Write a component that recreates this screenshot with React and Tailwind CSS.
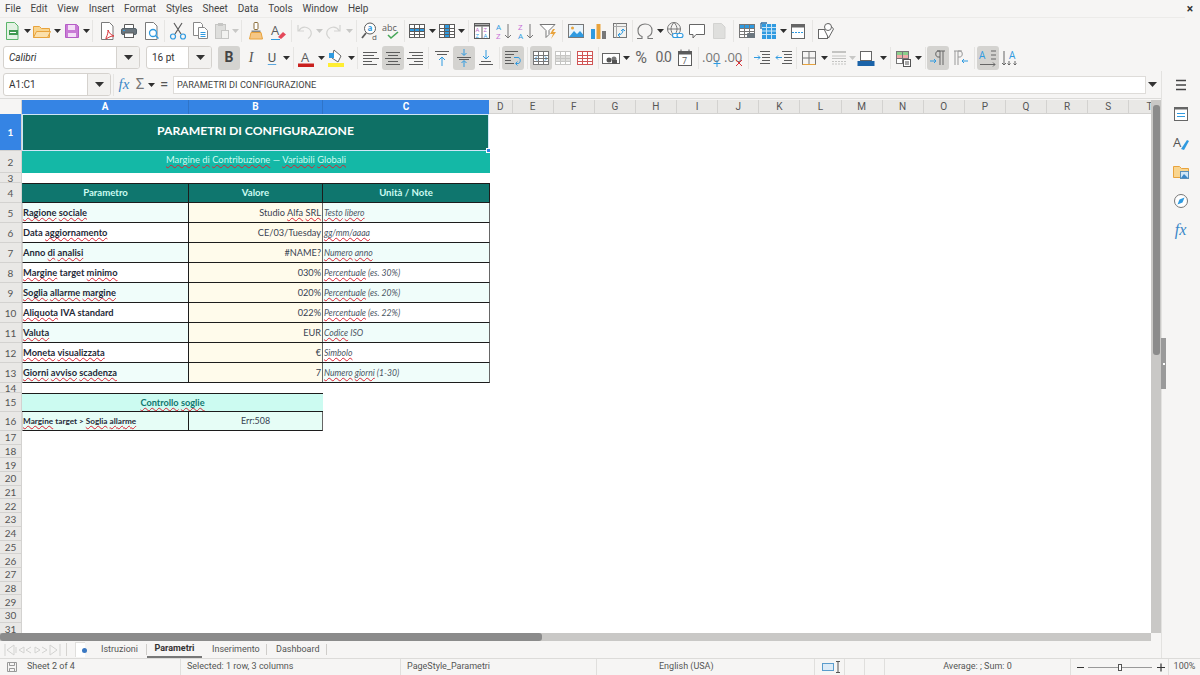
import React from 'react';

const B = '#2f9ae0', D = '#5c5c5c', O = '#e8a33d', R = '#d9343a';

const Ic = ({ children, w = 20 }) => (
  <svg width={w} height="20" viewBox={`0 0 ${w} 20`} fill="none" strokeWidth="1">{children}</svg>
);
const T = ({ on, children }) => (
  <div className={`flex h-[24px] w-[22px] shrink-0 items-center justify-center rounded-[3px] ${on ? 'bg-[#d4d3d0]' : ''}`}>{children}</div>
);
const A = ({ w, light }) => (
  <div className={`flex shrink-0 items-center justify-center ${w}`}>
    <svg width="7" height="4" viewBox="0 0 7 4" className="shrink-0"><path d="M0 0h7L3.500 4z" fill={light ? '#c8c8c6' : '#2e2e2e'} /></svg>
  </div>
);
const S = ({ w }) => (
  <div className={`flex h-[22px] shrink-0 justify-center ${w}`}><div className="h-full w-px bg-[#e6e5e3]" /></div>
);

const Lines = ({ xs, stroke = D }) => xs.map((l, i) => <path key={i} d={`M${l[0]} ${4 + i * 3}.500H${l[1]}`} stroke={stroke} />);
const Txt = ({ x, y, s = 10, c = D, i, b, children }) => (
  <text x={x} y={y} fontSize={s} fill={c} fontFamily="'Open Sans',sans-serif" fontStyle={i ? 'italic' : 'normal'} fontWeight={b ? 700 : 400}>{children}</text>
);
const Doc = ({ stroke = '#7a7a7a' }) => <path d="M4.500 1.500h8l3.500 3.500v13.500h-11.500z" fill="#fff" stroke={stroke} />;

const Grid3 = ({ fill, stroke = D }) => (
  <g>
    <rect x="2.500" y="3.500" width="15" height="13" fill="#fff" stroke={stroke} />
    {fill}
    <path d="M2.500 7.500h15M2.500 10.500h15M2.500 13.500h15M7.500 3.500v13M12.500 3.500v13" stroke={stroke} />
  </g>
);

function Toolbar1() {
  return (
    <div className="flex h-[26px] items-center pl-px">
      <T><Ic><path d="M4.500 1.500h8l3.500 3.500v13.500h-11.500z" fill="#e3f2e3" stroke="#5bb56a" /><rect x="7" y="9" width="9" height="5" fill="#3f9a50" /><path d="M8 11.500h6" stroke="#fff" /></Ic></T>
      <A w="w-[8px]" />
      <T><Ic><path d="M1.500 5.500h6l2 2h8v9h-16z" fill="#f9d58f" stroke={O} /><path d="M1.500 16.500l3-6h14l-3 6z" fill="#fbe0ac" stroke={O} /></Ic></T>
      <A w="w-[8px]" />
      <T><Ic><path d="M3.500 3.500h11l2 2v11h-13z" fill="#c97bd6" stroke="#b55cc6" /><rect x="6" y="4" width="7" height="5" fill="#f4dff7" /><rect x="6" y="12" width="8" height="4" fill="#f4dff7" /></Ic></T>
      <A w="w-[6px]" />
      <S w="w-[7px]" />
      <T><Ic><Doc /><path d="M9 17c2-4 2-6 2-8 1 3 3 5 6 6-3 0-5 1-8 3z" stroke={R} fill="#fff" /></Ic></T>
      <T><Ic><path d="M5.500 3.500h9v4h-9z" fill="#fff" stroke={D} /><rect x="2.500" y="7.500" width="15" height="6" rx="1.500" fill="#6b767e" stroke="#56626a" /><rect x="5.500" y="12" width="9" height="4.500" fill="#fff" stroke={D} /><path d="M4 9.500h2" stroke={B} /></Ic></T>
      <T><Ic><Doc /><circle cx="12" cy="12" r="3.500" fill="#fff" stroke={B} strokeWidth="1.300" /><path d="M14.500 14.500l3 3" stroke={B} strokeWidth="1.300" /></Ic></T>
      <S w="w-[5px]" />
      <T><Ic><path d="M6 2l7 11M14 2L7 13" stroke={D} strokeWidth="1.200" /><circle cx="5" cy="15.500" r="2.500" stroke={B} strokeWidth="1.200" /><circle cx="15" cy="15.500" r="2.500" stroke={B} strokeWidth="1.200" /></Ic></T>
      <T><Ic><path d="M3.500 1.500h7l2 2v11h-9z" fill="#fff" stroke="#888" /><path d="M8.500 6.500h6l3 3v8h-9z" fill="#fff" stroke="#888" /><path d="M10.500 11.500h5M10.500 13.500h5M10.500 15.500h5" stroke={B} /></Ic></T>
      <T><Ic><rect x="3.500" y="3.500" width="10" height="14" fill="#dededc" stroke="#c6c6c4" /><rect x="6" y="2" width="5" height="3" fill="#c6c6c4" /><rect x="9.500" y="9.500" width="7" height="8" fill="#f2f2f0" stroke="#c6c6c4" /></Ic></T>
      <A w="w-[5px]" light />
      <S w="w-[7px]" />
      <T><Ic><rect x="8" y="1.500" width="4" height="7" rx="1" fill="#fff" stroke="#8a6d3b" /><path d="M5.500 9.500h9v2h-9z" fill="#888" /><path d="M5 11.500h10l1.500 6.500h-13z" fill="#f6c785" stroke={O} /></Ic></T>
      <T><Ic><Txt x="3" y="14" s={13}>A</Txt><path d="M10 16l5-5 3 2.500-5 4.500z" fill="#e4485a" /><path d="M3 18.500h9" stroke={B} /></Ic></T>
      <S w="w-[4px]" />
      <T><Ic><path d="M5 9.500c3-5 10-4 12 1 1 3-1 6-3 7M4 4v6h6" stroke="#d3d3d1" strokeWidth="1.200" /></Ic></T>
      <A w="w-[8px]" light />
      <T><Ic><path d="M15 9.500c-3-5-10-4-12 1-1 3 1 6 3 7M16 4v6h-6" stroke="#d3d3d1" strokeWidth="1.200" /></Ic></T>
      <A w="w-[8px]" light />
      <S w="w-[6px]" />
      <T><Ic><circle cx="10" cy="7.500" r="5.500" fill="#fff" stroke={D} /><path d="M6 12l-4 5" stroke={D} strokeWidth="1.800" /><Txt x="7.500" y="10" s={8} c={B} b>a</Txt><Txt x="12" y="19" s={8}>d</Txt></Ic></T>
      <T><Ic w={22}><Txt x="1" y="10" s={9}>abc</Txt><path d="M7 14l3 3 7-6" stroke="#46a758" strokeWidth="1.600" /></Ic></T>
      <S w="w-[3px]" />
      <T><Ic><Grid3 fill={<rect x="3" y="7.500" width="14" height="3" fill={B} />} /></Ic></T>
      <A w="w-[8px]" />
      <T><Ic><Grid3 fill={<rect x="7.500" y="4" width="5" height="12" fill={B} />} /></Ic></T>
      <A w="w-[7px]" />
      <S w="w-[6px]" />
      <T><Ic><rect x="2.500" y="2.500" width="15" height="15" stroke={D} fill="#fff" /><path d="M2.500 4.500h15" stroke={D} strokeWidth="2" /><path d="M10 5.500v12" stroke={D} /><Txt x="3.500" y="10.500" s={6} c="#b65fc2">A</Txt><Txt x="11.500" y="10.500" s={6} c="#b65fc2">Z</Txt><Txt x="3.500" y="16.500" s={6} c={B}>Z</Txt><Txt x="11.500" y="16.500" s={6} c={B}>A</Txt></Ic></T>
      <T><Ic><Txt x="2" y="9" s={8} c={B}>A</Txt><Txt x="2" y="18" s={8} c="#c86dd7">Z</Txt><path d="M14 3v14M11 14l3 3 3-3" stroke="#777" /></Ic></T>
      <T><Ic><Txt x="2" y="9" s={8} c="#c86dd7">Z</Txt><Txt x="2" y="18" s={8} c={B}>A</Txt><path d="M14 3v14M11 14l3 3 3-3" stroke="#777" /></Ic></T>
      <T><Ic><path d="M2 3.500h15l-6 6v4l-3 3v-7z" fill="#fff" stroke="#777" /><path d="M15 8l-3 5h3l-2 5 5-7h-3l2-3z" fill={O} /></Ic></T>
      <S w="w-[6px]" />
      <T><Ic><rect x="2.500" y="3.500" width="15" height="13" fill="#eaf4fb" stroke="#777" /><circle cx="6.500" cy="7" r="1.500" fill={O} /><path d="M3 16l5-6 3 3 3-3 3.500 4v2H3z" fill={B} /></Ic></T>
      <T><Ic><rect x="3" y="8" width="4" height="10" fill={B} /><rect x="8.500" y="3" width="4" height="15" fill={O} /><rect x="14" y="10" width="4" height="8" fill="#777" /></Ic></T>
      <T><Ic><rect x="3.500" y="2.500" width="13" height="14" fill="#f2f2f0" stroke="#777" /><path d="M3.500 5.500h13M6.500 2.500v14" stroke="#aaa" /><path d="M8 14c3 0 5-2 5-5M11 10l2-2 2 2M10 12l-2 2 2 2" stroke={B} /></Ic></T>
      <S w="w-[3px]" />
      <T><Ic><path d="M2 17.500h5v-2c-3-1-4-3-4-6 0-4 3-6.500 7-6.500s7 2.500 7 6.500c0 3-1 5-4 6v2h5" stroke="#777" strokeWidth="1.100" /></Ic></T>
      <A w="w-[8px]" />
      <T><Ic><circle cx="9" cy="8" r="6.500" stroke="#777" /><path d="M2.500 8h13M9 1.500c-4 4-4 9 0 13M9 1.500c4 4 4 9 0 13" stroke="#777" /><rect x="7.500" y="12.500" width="6" height="4" rx="2" fill="#fff" stroke={B} strokeWidth="1.100" /><rect x="12" y="12.500" width="6" height="4" rx="2" fill="#fff" stroke={B} strokeWidth="1.100" /></Ic></T>
      <T><Ic><path d="M2.500 3.500h15v10H9l-3 3.500v-3.500H2.500z" fill="#fff" stroke="#666" /></Ic></T>
      <T><Ic><path d="M4.500 2.500h8l3.500 3.500v11.500H4.500z" fill="#dfdfdd" stroke="#d3d3d1" /></Ic></T>
      <S w="w-[6px]" />
      <T><Ic><Grid3 stroke="#777" fill={<rect x="3" y="4" width="14" height="3.500" fill={B} />} /><rect x="10" y="12" width="8" height="5" rx="1" fill="#6b767e" /></Ic></T>
      <T><Ic><rect x="3" y="3" width="14" height="15" fill={B} /><path d="M3 6.500h14M3 10h14M3 13.500h14M7.500 3v15M12.500 3v15" stroke="#c9e5f7" /><path d="M2 2h6M2 2v6" stroke="#2b6ca3" strokeWidth="1.300" /></Ic></T>
      <A w="w-[7px]" />
      <T><Ic><rect x="3.500" y="3.500" width="13" height="14" fill="#fff" stroke="#666" /><rect x="3.500" y="3.500" width="13" height="3" fill="#666" /><path d="M4 11.500h12" stroke={B} strokeDasharray="2 1" /></Ic></T>
      <S w="w-[6px]" />
      <T><Ic><rect x="2.500" y="8.500" width="9" height="9" fill="#fff" stroke="#666" /><path d="M12.500 2l5 6-5 9-4-8z" fill="#fff" stroke="#666" /><circle cx="12" cy="6" r="3.500" fill="#fff" stroke="#666" /></Ic></T>
    </div>
  );
}

const Combo = ({ w, label, italic }) => (
  <div className={`flex h-[23px] shrink-0 overflow-hidden rounded-[3px] border border-[#d5d2ce] bg-white ${w}`}>
    <div className={`flex min-w-0 flex-1 items-center pl-[5px] text-[10px] text-[#333] ${italic ? 'italic' : ''}`}>{label}</div>
    <div className="flex w-[23px] items-center justify-center border-l border-[#d5d2ce] bg-[#f2f1ef]">
      <svg width="9" height="5" viewBox="0 0 9 5"><path d="M0 0h9L4.500 5z" fill="#333" /></svg>
    </div>
  </div>
);

const Align = ({ rows }) => <Ic><Lines xs={rows} /></Ic>;

function Toolbar2() {
  return (
    <div className="flex h-[27px] items-center pl-[3px]">
      <Combo w="w-[137px] mr-[6px]" label="Calibri" italic />
      <Combo w="w-[66px]" label="16 pt" />
      <div className="w-[6px] shrink-0" />
      <T on><span className="text-[14px] font-bold text-[#444]">B</span></T>
      <T><span className="font-['Liberation_Serif',serif] text-[14px] italic text-[#555]">I</span></T>
      <div className="flex w-[20px] shrink-0 justify-center"><span className="text-[13px] text-[#555] underline decoration-[#5aa7de] underline-offset-2">U</span></div>
      <A w="w-[9px]" />
      <S w="w-[4px]" />
      <T><Ic><Txt x="5" y="14" s={13}>A</Txt><rect x="2" y="15.500" width="16" height="3.500" fill="#c9211e" /></Ic></T>
      <A w="w-[8px]" />
      <T><Ic><path d="M8 2l7 6-3 6-6-4z" fill="#fff" stroke="#666" /><rect x="3" y="5" width="5" height="5" fill={B} /><rect x="2" y="15" width="16" height="4" fill="#ffee33" /></Ic></T>
      <A w="w-[8px]" />
      <S w="w-[5px]" />
      <T><Align rows={[[2, 16], [2, 13], [2, 18], [2, 11], [2, 16]]} /></T>
      <T on><Align rows={[[3, 17], [5, 15], [2, 18], [5, 15], [3, 17]]} /></T>
      <T><Align rows={[[4, 18], [7, 18], [2, 18], [9, 18], [4, 18]]} /></T>
      <S w="w-[5px]" />
      <T><Ic><path d="M3 3.500h14M5 6.500h10" stroke={D} /><path d="M10 18V9M7 12l3-3 3 3" stroke={B} /></Ic></T>
      <T on><Ic><path d="M10 1v6M7.500 5l2.500 2.500L12.500 5M10 19v-6M7.500 15l2.500-2.500 2.500 2.500" stroke={B} /><path d="M3 9.500h14M5 11.500h10" stroke={D} /></Ic></T>
      <T><Ic><path d="M10 2v9M7 8l3 3 3-3" stroke={B} /><path d="M5 13.500h10M3 16.500h14" stroke={D} /></Ic></T>
      <S w="w-[5px]" />
      <T on><Ic><path d="M2 3.500h13M2 6.500h9M2 9.500h6M2 12.500h6M2 15.500h9" stroke={D} /><path d="M11 9.500h4c3 0 3 6 0 6h-2M14.500 13.500l-2 2 2 2" stroke={B} /></Ic></T>
      <S w="w-[6px]" />
      <T on><Ic><Grid3 stroke="#777" fill={<path d="M4 10.500h12M6 8.500l-2 2 2 2M14 8.500l2 2-2 2" stroke={B} />} /></Ic></T>
      <T><Ic><Grid3 stroke="#c6c6c4" fill={<rect x="3" y="7.500" width="14" height="6" fill="#dededc" />} /></Ic></T>
      <T><Ic><Grid3 stroke="#d05555" /></Ic></T>
      <S w="w-[4px]" />
      <T><Ic><rect x="1.500" y="5.500" width="17" height="10" fill="#fff" stroke="#666" /><circle cx="8" cy="12" r="2.500" fill="#555" /><circle cx="13" cy="11" r="2.500" fill="#777" /><rect x="11" y="12" width="5" height="4" fill="#555" /></Ic></T>
      <A w="w-[8px]" />
      <T><span className="text-[16px] text-[#666]">%</span></T>
      <T><span className="text-[14px] tracking-[-1.500px] text-[#666]">0.0</span></T>
      <T><Ic><rect x="3.500" y="3.500" width="13" height="14" fill="#fff" stroke={D} /><path d="M3.500 3.500h13v3h-13z" fill={D} /><path d="M6 1.500v3M14 1.500v3" stroke={D} /><Txt x="7" y="15.500" s={9}>7</Txt></Ic></T>
      <S w="w-[5px]" />
      <T><Ic><Txt x="0" y="14" s={13} c="#777">.00</Txt><path d="M15 12v7M11.500 15.500h7" stroke={B} /></Ic></T>
      <T><Ic><Txt x="0" y="14" s={13} c="#777">.00</Txt><path d="M12 12l6 6M18 12l-6 6" stroke={R} /></Ic></T>
      <S w="w-[6px]" />
      <T><Ic><path d="M8 3.500h10M10 6.500h8M10 9.500h8M10 12.500h8M8 15.500h10" stroke={D} /><path d="M2 9.500h6M6 7.500l2 2-2 2" stroke={B} /></Ic></T>
      <T><Ic><path d="M8 3.500h10M10 6.500h8M10 9.500h8M10 12.500h8M8 15.500h10" stroke={D} /><path d="M2 9.500h6M4 7.500l-2 2 2 2" stroke={B} /></Ic></T>
      <S w="w-[3px]" />
      <T><Ic><rect x="3.500" y="3.500" width="13" height="13" stroke="#777" /><path d="M10 3.500v13M3.500 10h13" stroke="#777" /><path d="M3.500 16.500h13" stroke={O} /></Ic></T>
      <A w="w-[8px]" />
      <T><Ic><path d="M3 4h14" stroke="#c4c4c2" strokeWidth="2" /><path d="M3 8h14M3 10.500h14" stroke="#c4c4c2" /><path d="M3 13.500h14M3 16h14" stroke="#c4c4c2" strokeDasharray="2 1" /></Ic></T>
      <A w="w-[5px]" light />
      <T><Ic><rect x="4.500" y="3.500" width="11" height="9" fill="#fff" stroke="#666" /><rect x="1.500" y="13" width="17" height="5" fill="#1b63a8" /></Ic></T>
      <A w="w-[12px]" />
      <S w="w-[3px]" />
      <T><Ic><rect x="3.500" y="3.500" width="12" height="12" fill="#fff" stroke="#777" /><rect x="4" y="4" width="11" height="3" fill="#8ccf8c" /><rect x="4" y="7" width="11" height="3" fill="#f0aaaa" /><path d="M3.500 10.500h12M9.500 3.500v12" stroke="#777" /><rect x="10.500" y="11.500" width="7" height="7" fill="#fff" stroke="#555" /><path d="M12 14h4M12 16h4" stroke="#555" /></Ic></T>
      <A w="w-[9px]" />
      <S w="w-[4px]" />
      <T on><Ic><path d="M12 3v14M15 3v14M9 3h8M12 3H10c-3 0-3 6 0 6h2" stroke="#666" /><path d="M2 13h6M6 11l2 2-2 2" stroke={B} /></Ic></T>
      <T><Ic><path d="M8 3v14M5 3v14M12 3H4M8 3h2c3 0 3 6 0 6H8" stroke="#999" /><path d="M18 13h-6M14 11l-2 2 2 2" stroke={B} /></Ic></T>
      <S w="w-[6px]" />
      <T on><Ic><Txt x="1" y="11" s={10} c={B}>A</Txt><path d="M2 16.500h15M15 14.500l2 2-2 2M13 3h5M13 7h5M13 11h5" stroke="#666" /></Ic></T>
      <T><Ic><Txt x="9" y="11" s={10} c={B}>A</Txt><path d="M4 3v14M2 15l2 2 2-2M9 13v4M7.500 15.500L9 17l1.500-1.500M15 13v4M13.500 15.500L15 17l1.500-1.500" stroke="#666" /></Ic></T>
    </div>
  );
}

function FormulaBar() {
  return (
    <div className="flex h-[27px] items-center pl-[3px] pr-[3px]">
      <div className="flex h-[23px] w-[108px] shrink-0 overflow-hidden rounded-[3px] border border-[#d5d2ce] bg-white">
        <div className="flex flex-1 items-center pl-[5px] text-[10px] text-[#333]">A1:C1</div>
        <div className="flex w-[23px] items-center justify-center border-l border-[#d5d2ce] bg-[#f2f1ef]">
          <svg width="9" height="5" viewBox="0 0 9 5"><path d="M0 0h9L4.500 5z" fill="#333" /></svg>
        </div>
      </div>
      <S w="w-[4px]" />
      <div className="flex w-[18px] shrink-0 justify-center font-['Liberation_Serif',serif] text-[15px] italic text-[#3a87c8]">fx</div>
      <div className="flex w-[14px] shrink-0 justify-center text-[15px] text-[#777]">Σ</div>
      <A w="w-[8px]" />
      <div className="flex w-[18px] shrink-0 justify-center text-[15px] text-[#555]">=</div>
      <div className="flex h-[18px] w-[973px] shrink-0 items-center border border-[#dedcd9] bg-white pl-[3px] text-[9.200px] text-[#444]">PARAMETRI DI CONFIGURAZIONE</div>
      <div className="flex flex-1 justify-center">
        <svg width="9" height="5" viewBox="0 0 9 5"><path d="M0 0h9L4.500 5z" fill="#333" /></svg>
      </div>
    </div>
  );
}

const W = ({ children }) => <span className="underline decoration-[#d23] decoration-wavy decoration-1 underline-offset-[0.500px] [text-decoration-skip-ink:none]">{children}</span>;

const RowH = ({ n, active }) => (
  <div className={`flex h-full w-[22px] shrink-0 items-center justify-center overflow-hidden border-b border-r border-[#d3d2d0] text-[10px] leading-none ${active ? 'bg-[#3584e4] font-bold text-white' : 'bg-[#e9e8e6] text-[#555]'}`}>{n}</div>
);

const rows = [
  [5, <><W>Ragione</W> <W>sociale</W></>, <>Studio <W>Alfa</W> <W>SRL</W></>, <><W>Testo</W> <W>libero</W></>],
  [6, <>Data <W>aggiornamento</W></>, 'CE/03/Tuesday', <><W>gg/mm/aaaa</W></>],
  [7, <>Anno <W>di</W> <W>analisi</W></>, '#NAME?', <><W>Numero</W> <W>anno</W></>],
  [8, <><W>Margine</W> target <W>minimo</W></>, '030%', <><W>Percentuale</W> (es. 30%)</>],
  [9, <><W>Soglia</W> <W>allarme</W> <W>margine</W></>, '020%', <><W>Percentuale</W> (es. 20%)</>],
  [10, <><W>Aliquota</W> IVA standard</>, '022%', <><W>Percentuale</W> (es. 22%)</>],
  [11, <><W>Valuta</W></>, 'EUR', <><W>Codice</W> ISO</>],
  [12, <><W>Moneta</W> <W>visualizzata</W></>, '€', <><W>Simbolo</W></>],
  [13, <><W>Giorni</W> <W>avviso</W> <W>scadenza</W></>, '7', <><W>Numero</W> <W>giorni</W> (1-30)</>],
];
const emptyRows = [17, 18, 19, 20, 21, 22, 23, 24, 25, 26, 27, 28, 29, 30, 31];
const otherCols = ['E', 'F', 'G', 'H', 'I', 'J', 'K', 'L', 'M', 'N', 'O', 'P', 'Q', 'R', 'S', 'T'];

function Sheet() {
  return (
    <div className="relative min-w-0 flex-1 overflow-hidden bg-white font-['Lato',sans-serif]">
      {/* column headers */}
      <div className="flex h-[14px] font-['Roboto',sans-serif] text-[10px] leading-[14px]">
        <div className="w-[22px] shrink-0 border-r border-[#d3d2d0] bg-[#f6f5f4]" />
        <div className="flex w-[467px] shrink-0 bg-[#3584e4] text-center font-bold text-white">
          <div className="w-[167px] border-r border-[#2f74c8]">A</div>
          <div className="w-[134px] border-r border-[#2f74c8]">B</div>
          <div className="flex-1">C</div>
        </div>
        <div className="w-[23.500px] shrink-0 border-b border-r border-[#d3d2d0] bg-[#e9e8e6] text-center text-[#555]">D</div>
        {otherCols.map(c => (
          <div key={c} className="w-[41.140px] shrink-0 border-b border-r border-[#d3d2d0] bg-[#e9e8e6] text-center text-[#555]">{c}</div>
        ))}
      </div>

      <div className="flex h-[37px]">
        <RowH n="1" active />
        <div className="relative flex w-[467px] shrink-0 items-center justify-center border border-[#cfe6f7] bg-[#0e7065] pb-[2px] text-[12.200px] font-bold text-white">
          PARAMETRI DI CONFIGURAZIONE
          <div className="absolute right-[-3px] bottom-[-3px] h-[5px] w-[5px] border border-white bg-[#3584e4]" />
        </div>
      </div>
      <div className="flex h-[22px]">
        <RowH n="2" />
        <div className="flex w-[468px] shrink-0 items-center justify-center bg-[#14b8a6] pb-[3px] text-[9.400px] text-[#ccfbf1]">
          <span><W>Margine</W> <W>di</W> <W>Contribuzione</W> — <W>Variabili</W> <W>Globali</W></span>
        </div>
      </div>
      <div className="flex h-[10px]"><RowH n="3" /></div>
      <div className="flex h-[20px]">
        <RowH n="4" />
        <div className="flex w-[468px] shrink-0 border border-[#1c1c1c] border-l-[#0f766e] bg-[#0f766e] text-center text-[9.600px] font-bold leading-[18px] text-[#ccfbf1]">
          <div className="w-[166px] border-r border-[#1c1c1c]">Parametro</div>
          <div className="w-[134px] border-r border-[#1c1c1c]">Valore</div>
          <div className="flex-1">Unità / Note</div>
        </div>
      </div>
      {rows.map(([n, a, b, c]) => (
        <div key={n} className="flex h-[20px]">
          <RowH n={n} />
          <div className={`flex w-[468px] shrink-0 border-b border-r border-l border-[#1c1c1c] border-l-[#d3d2d0] border-r-[#666] leading-[19px] ${n % 2 ? 'bg-[#f0fdfa]' : 'bg-white'}`}>
            <div className="w-[166px] border-r border-[#1c1c1c] text-[9.300px] font-bold text-[#1f2937]">{a}</div>
            <div className="w-[134px] border-r border-[#666] bg-[#fffbeb] pr-px text-right text-[9.200px] whitespace-nowrap text-[#374151]">{b}</div>
            <div className="flex-1 pl-px text-[8.600px] leading-[20px] italic text-[#4b5563]">{c}</div>
          </div>
        </div>
      ))}
      <div className="flex h-[10px]"><RowH n="14" /></div>
      <div className="flex h-[19px]">
        <RowH n="15" />
        <div className="flex w-[301px] shrink-0 items-center justify-center border-b border-t border-[#1c1c1c] bg-[#ccfbf1] text-[9.200px] font-bold text-[#0f766e]">
          <span><W>Controllo</W> <W>soglie</W></span>
        </div>
      </div>
      <div className="flex h-[19px]">
        <RowH n="16" />
        <div className="flex w-[301px] shrink-0 border-b border-r border-l border-[#1c1c1c] border-l-[#d3d2d0] border-r-[#666] bg-[#e6fdf6] leading-[18px]">
          <div className="w-[166px] border-r border-[#1c1c1c] text-[8.200px] font-bold text-[#1f2937]"><W>Margine</W> target &gt; <W>Soglia</W> <W>allarme</W></div>
          <div className="flex-1 text-center text-[8.900px] text-[#374151]">Err:508</div>
        </div>
      </div>
      {emptyRows.map(n => (
        <div key={n} className="flex h-[13.700px]"><RowH n={n} /></div>
      ))}
    </div>
  );
}

function VScroll() {
  return (
    <div className="flex w-[10px] shrink-0 flex-col items-center bg-[#c9c8c6] pt-[5px]">
      <div className="h-[250px] w-[7px] rounded-[3px] bg-[#8b8b8b]" />
    </div>
  );
}

function Sidebar() {
  return (
    <div className="flex w-[38px] shrink-0 flex-col items-center gap-[9px] border-l border-[#e3e2e0] pt-[4px]">
      <Ic><path d="M5 5.500h10M5 10h10M5 14.500h10" stroke="#444" strokeWidth="1.400" /></Ic>
      <Ic><rect x="3.500" y="3.500" width="13" height="13" fill="#fff" stroke="#666" /><path d="M3.500 4.500h13" stroke="#666" strokeWidth="2" /><path d="M6 9.500h8M6 12.500h8" stroke={B} /></Ic>
      <Ic><Txt x="2" y="14" s={13} c="#555">A</Txt><path d="M10 16l6-9 2 1-5 9z" fill={B} /></Ic>
      <Ic><path d="M2.500 4.500h6l2 2h7v9h-15z" fill="#f9d58f" stroke={O} /><rect x="9.500" y="9.500" width="8" height="7" fill="#cfe6f7" stroke="#5a8fb8" /><path d="M10 16l3-4 4 4z" fill="#3a87c8" /></Ic>
      <Ic><circle cx="10" cy="10" r="6.500" fill="#fff" stroke="#777" /><path d="M13.500 6.500L11.500 11.500 6.500 13.500 8.500 8.500z" fill={B} /></Ic>
      <div className="flex h-[20px] items-center font-['Liberation_Serif',serif] text-[16px] italic text-[#3a87c8]">fx</div>
    </div>
  );
}

function Tabs() {
  return (
    <div className="flex h-[17px] items-center text-[9px] text-[#555]">
      <div className="flex w-[66px] shrink-0 items-center justify-center">
        <svg width="58" height="12" viewBox="0 0 58 12" fill="none" stroke="#d3d3d1">
          <path d="M1 0v12M10 1L3 6l7 5zM12 3v6M20 3l-5 3 5 3zM27 3l-5 3 5 3M31 3l5 3-5 3zM38 3l5 3-5 3M46 1l7 5-7 5zM56 0v12" />
        </svg>
      </div>
      <div className="h-[13px] w-px bg-[#d5d3d0]" />
      <div className="ml-[8px] flex h-[15px] w-[10px] shrink-0 items-center justify-end border-l border-t border-[#e0dfdd] bg-white">
        <div className="mr-[-2px] h-[5px] w-[5px] rounded-full bg-[#3a78c2]" />
      </div>
      <div className="w-[61px] shrink-0 pl-[16px]">Istruzioni</div>
      <div className="h-[11px] w-px bg-[#cfcdca]" />
      <div className="flex h-full w-[55px] shrink-0 items-center justify-center border-b-2 border-[#777] font-bold text-[#333]">Parametri</div>
      <div className="w-[64px] shrink-0 pl-[10px]">Inserimento</div>
      <div className="h-[11px] w-px bg-[#cfcdca]" />
      <div className="w-[60px] shrink-0 border-r border-[#cfcdca] pl-[9px] leading-[11px]">Dashboard</div>
    </div>
  );
}

const Cell = ({ w, className = '', children }) => (
  <div className={`flex h-full shrink-0 items-center border-r border-[#e0dfdd] ${w} ${className}`}>{children}</div>
);

function StatusBar() {
  return (
    <div className="flex h-[17px] w-full items-center border-t border-[#dcdbd9] text-[9px] text-[#555]">
      <Cell w="w-[181px]">
        <svg width="14" height="14" viewBox="0 0 14 14" fill="none" className="ml-[5px]" stroke="#999"><path d="M2.500 2.500h9v9h-9zM4.500 2.500v3h5v-3M4.500 11.500v-3h5v3" /></svg>
        <span className="ml-[8px]">Sheet 2 of 4</span>
      </Cell>
      <Cell w="w-[220px]" className="pl-[6px]">Selected: 1 row, 3 columns</Cell>
      <Cell w="w-[196px]" className="pl-[6px]">PageStyle_Parametri</Cell>
      <Cell w="w-[218px]" className="pl-[62px]">English (USA)</Cell>
      <Cell w="w-[30px]" className="pl-[7px]">
        <svg width="22" height="14" viewBox="0 0 22 14" fill="none" className="shrink-0">
          <rect x="0.500" y="3.500" width="11" height="7" fill="#dcebf7" stroke="#5a9ccc" />
          <path d="M14 1.500h4M16 1.500v11M14 12.500h4" stroke="#555" />
        </svg>
      </Cell>
      <Cell w="w-[20px]" />
      <Cell w="w-[20px]" />
      <Cell w="w-[186px]" className="justify-center">Average: ; Sum: 0</Cell>
      <div className="flex w-[97px] shrink-0 items-center pl-[6px]">
        <svg width="90" height="12" viewBox="0 0 90 12" fill="none" stroke="#555">
          <path d="M0 6.500h7M80 6.500h8M84 2.500v8" stroke="#333" strokeWidth="1.200" />
          <path d="M11 6.500h64" stroke="#999" />
          <rect x="41.500" y="3.500" width="3" height="6" fill="#fff" />
        </svg>
      </div>
      <div className="h-full w-px bg-[#e0dfdd]" />
      <div className="flex-1 text-center">100%</div>
    </div>
  );
}

export default function App() {
  const menus = ['File', 'Edit', 'View', 'Insert', 'Format', 'Styles', 'Sheet', 'Data', 'Tools', 'Window', 'Help'];
  return (
    <div className="relative flex h-[675px] w-[1200px] flex-col overflow-hidden bg-[#f6f5f4] font-['Roboto',sans-serif] text-[#333]">
      <div className="flex h-[17px] items-center gap-[9.800px] pl-[5px] text-[10px] text-[#444]">
        {menus.map(m => <span key={m}>{m}</span>)}
        <span className="ml-auto mr-[7px] text-[12px] font-bold text-[#333]">×</span>
      </div>
      <div className="h-px w-[1185px] bg-[#ecebe9]" />
      <Toolbar1 />
      <Toolbar2 />
      <div className="flex min-h-0 flex-1">
        <div className="flex w-[1161px] shrink-0 flex-col">
          <FormulaBar />
          <div className="h-[2px] shrink-0 border-t border-[#dcdbd9]" />
          <div className="flex min-h-0 flex-1">
            <Sheet />
            <VScroll />
          </div>
          <div className="flex h-[8px] shrink-0">
            <div className="w-[1151px] bg-[#c9c8c6]"><div className="h-full w-[542px] rounded-[3px] bg-[#8b8b8b]" /></div>
          </div>
          <Tabs />
        </div>
        <Sidebar />
      </div>
      <StatusBar />
      {/* sidebar collapse handle sits over the scrollbar edge */}
      <div className="absolute left-[1161px] top-[338px] flex h-[51px] w-[5px] items-center justify-center bg-[#9a9a9a]">
        <div className="h-[2px] w-[2px] bg-white" />
      </div>
    </div>
  );
}
